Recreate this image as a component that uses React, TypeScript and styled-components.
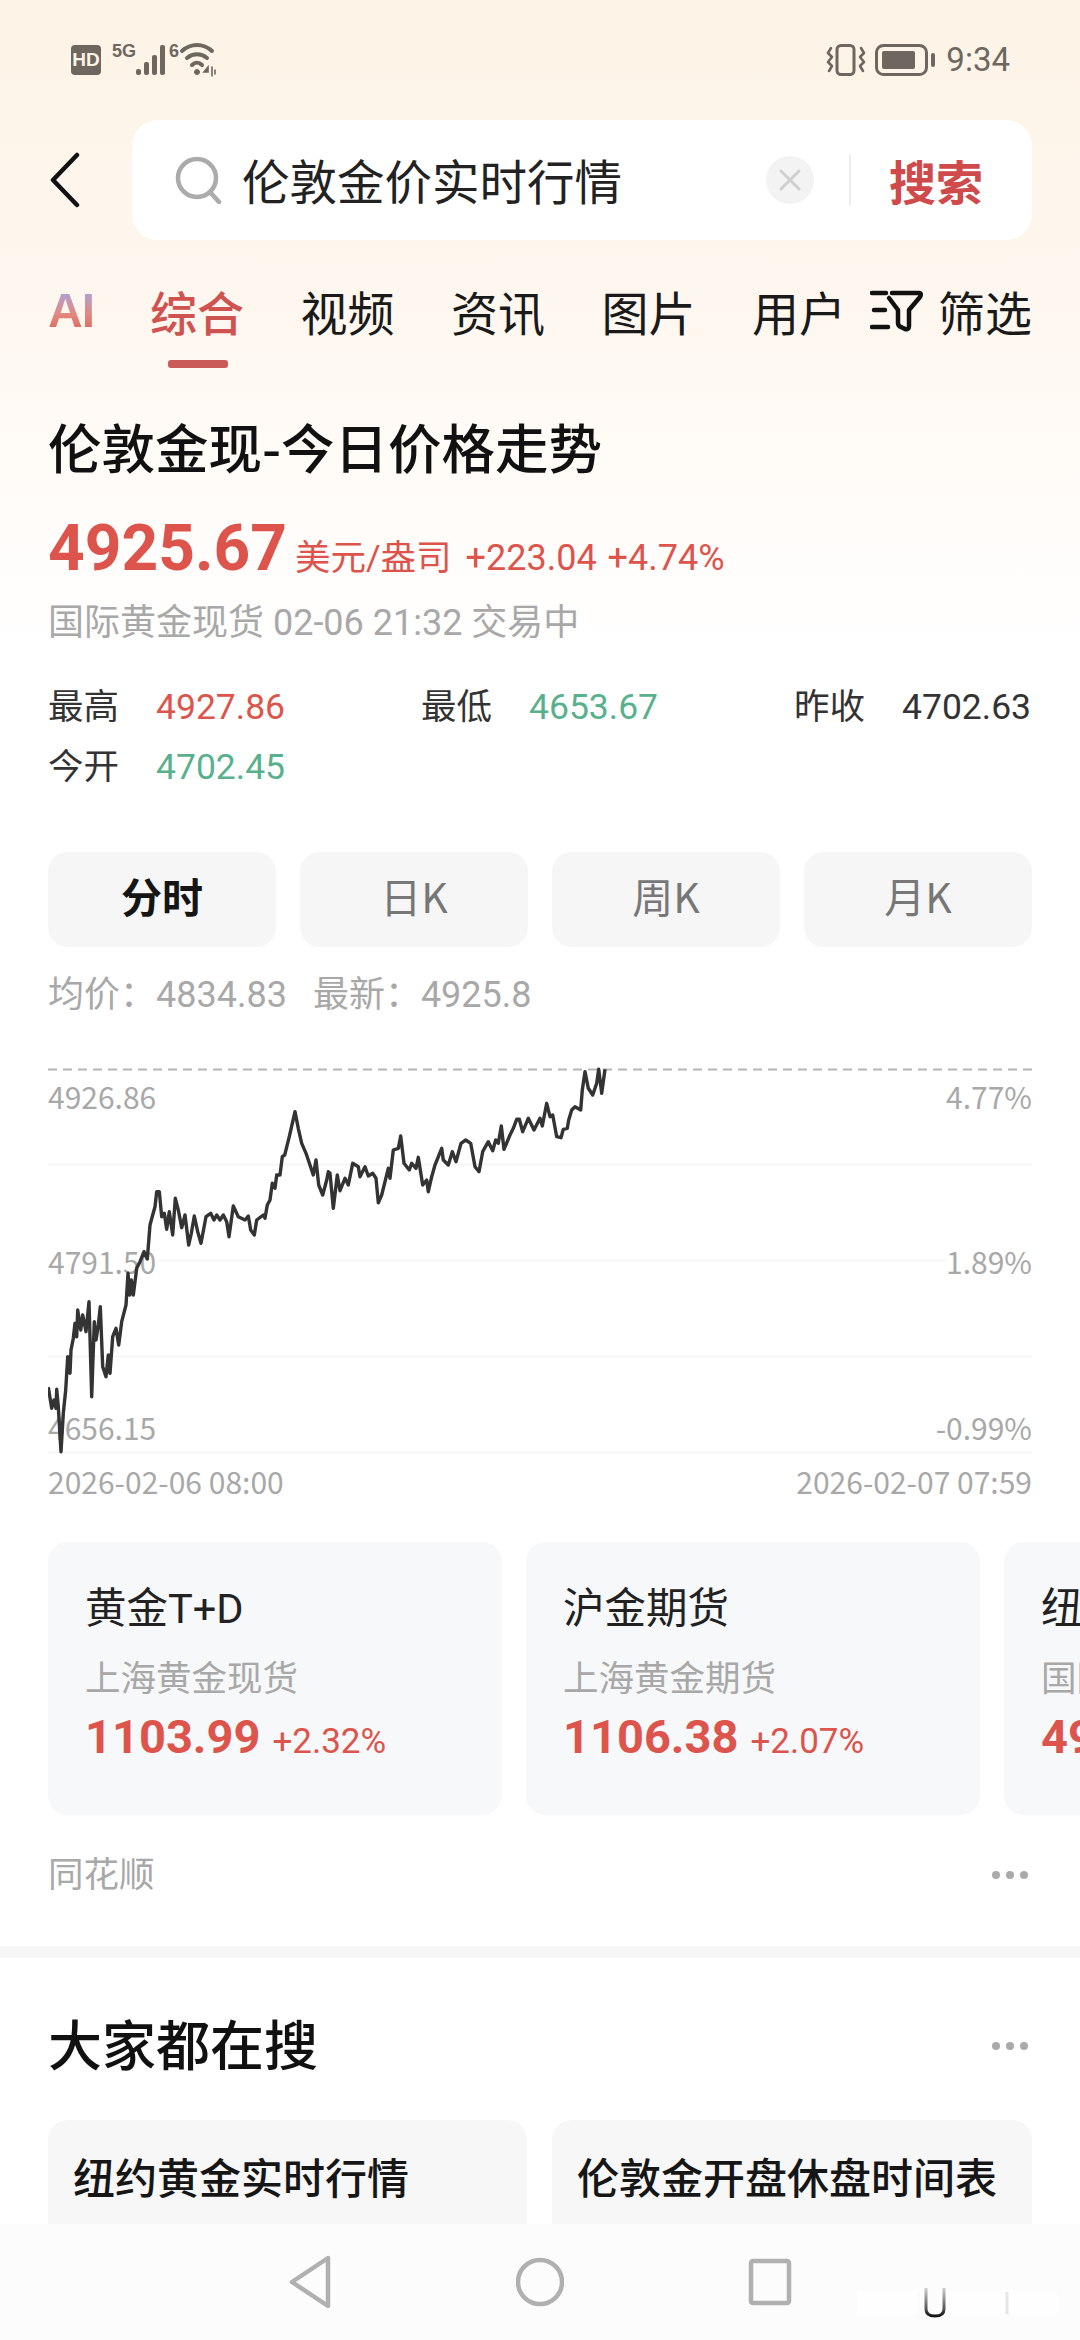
import React from "react";
import styled, { createGlobalStyle } from "styled-components";

const GlobalStyle = createGlobalStyle`
  html, body { margin: 0; padding: 0; background: #fff; }
  * { box-sizing: border-box; }
  body { font-family: "Noto Sans CJK SC", "Noto Sans", sans-serif; }
`;

const RED = "#dc544b";
const GREEN = "#58b08d";
const LABEL = "#a8a8a8";
const TAN = "#6e675f";
const MIXED = `Roboto, "Noto Sans CJK SC", sans-serif`;

const Page = styled.div`
  position: relative;
  width: 1080px;
  height: 2340px;
  overflow: hidden;
  background: linear-gradient(#fdf3e6 0, #fef7ef 300px, #fffaf5 420px, #fffdfb 560px, #fff 660px);
`;
const Top = styled.header`
  height: 400px;
`;
const StatusBar = styled.div`
  height: 120px;
  padding: 0 70px 0 71px;
  display: flex;
  align-items: center;
  justify-content: space-between;
`;
const StatusGroup = styled.div`
  display: flex;
  align-items: center;
  gap: ${(p: { $gap: number }) => p.$gap}px;
`;
const Hd = styled.span`
  width: 30px;
  height: 30px;
  border-radius: 4px;
  background: ${TAN};
  color: #fdf3e6;
  font: 700 19px/30px "Liberation Sans Narrow", "Liberation Sans", sans-serif;
  text-align: center;
`;
const NetTag = styled.span<{ $gap: number }>`
  position: relative;
  top: -9px;
  margin-left: ${(p) => p.$gap}px;
  color: ${TAN};
  font: 700 18px/18px "Liberation Sans Narrow", "Liberation Sans", sans-serif;
`;
const Clock = styled.span`
  color: ${TAN};
  font: 400 33px/40px Roboto, sans-serif;
`;
const SearchRow = styled.div`
  height: 120px;
  padding: 0 48px;
  display: flex;
  align-items: center;
  gap: 50px;
`;
const SearchBox = styled.div`
  flex: 1;
  height: 120px;
  padding: 0 49px 0 42px;
  background: #fff;
  border-radius: 26px;
  display: flex;
  align-items: center;
`;
const Query = styled.span`
  flex: 1;
  margin-left: 20px;
  color: #222;
  font-size: 47.5px;
  line-height: 60px;
`;
const Clear = styled.span`
  width: 48px;
  height: 48px;
  margin-right: -3px;
  border-radius: 50%;
  background: #f3f3f3;
  display: flex;
  align-items: center;
  justify-content: center;
`;
const Rule = styled.span`
  width: 2px;
  height: 50px;
  margin: 0 38px;
  background: #ececec;
`;
const SearchBtn = styled.span`
  color: #cf4b4b;
  font-size: 47px;
  font-weight: 700;
  line-height: 60px;
`;
const Tabs = styled.nav`
  margin-top: 41px;
  height: 60px;
  padding: 0 48px;
  display: flex;
  align-items: center;
`;
const AiTab = styled.span`
  flex: none;
  width: 102px;
  font: 700 48px/60px "Liberation Sans", sans-serif;
  letter-spacing: -1px;
  background: linear-gradient(#a3a6e6 12%, #e28a80 55%, #dc5f58 90%);
  -webkit-background-clip: text;
  background-clip: text;
  color: transparent;
`;
const Tab = styled.span<{ $active?: boolean; $last?: boolean }>`
  position: relative;
  flex: none;
  width: ${(p) => (p.$last ? 116 : 150.5)}px;
  font-size: 47px;
  line-height: 60px;
  color: ${(p) => (p.$active ? "#cf5350" : "#1a1a1a")};
  font-weight: ${(p) => (p.$active ? 500 : 400)};
  &::after {
    content: "";
    display: ${(p) => (p.$active ? "block" : "none")};
    position: absolute;
    left: 18px;
    top: 79px;
    width: 60px;
    height: 8px;
    border-radius: 3px;
    background: #c95a57;
  }
`;
const Filter = styled.span`
  margin-left: auto;
  display: flex;
  align-items: center;
  gap: 14px;
  font-size: 47px;
  line-height: 60px;
  color: #1a1a1a;
  white-space: nowrap;
  flex: none;
`;
const Section = styled.section`
  padding: 0 48px;
`;
const Title = styled.h1`
  margin: 16px 0 0;
  font-size: 53.5px;
  line-height: 60px;
  font-weight: 500;
  color: #111;
`;
const PriceRow = styled.div`
  margin-top: 33px;
  height: 80px;
  display: flex;
  align-items: baseline;
  color: ${RED};
  font-family: ${MIXED};
`;
const Price = styled.span`
  font-size: 64px;
  font-weight: 700;
  line-height: 80px;
`;
const PriceUnit = styled.span`
  margin-left: 8px;
  font-size: 35.5px;
`;
const PriceChange = styled.span`
  margin-left: 14px;
  font-size: 36px;
  word-spacing: 2px;
`;
const Sub = styled.div`
  margin-top: 12px;
  font-family: ${MIXED};
  font-size: 36px;
  line-height: 44px;
  color: ${LABEL};
`;
const Stats = styled.div`
  margin-top: 32px;
  display: grid;
  grid-template-columns: 373px 373px 238px;
  grid-auto-rows: 60px;
  font-family: ${MIXED};
  font-size: 35.5px;
  line-height: 60px;
`;
const Stat = styled.div`
  display: flex;
  color: #333;
`;
const StatLabel = styled.span`
  width: 108px;
`;
const StatValue = styled.span<{ $color: string }>`
  color: ${(p) => p.$color};
`;
const Segments = styled.div`
  margin-top: 55px;
  display: grid;
  grid-template-columns: repeat(4, 228px);
  gap: 24px;
`;
const Segment = styled.div<{ $on?: boolean }>`
  height: 95px;
  border-radius: 20px;
  background: #f6f6f6;
  text-align: center;
  font-size: 41px;
  line-height: 86px;
  font-weight: ${(p) => (p.$on ? 700 : 400)};
  color: ${(p) => (p.$on ? "#151515" : "#777")};
`;
const AvgRow = styled.div`
  margin-top: 26px;
  display: flex;
  gap: 26px;
  font-family: ${MIXED};
  font-size: 36px;
  line-height: 44px;
  color: ${LABEL};
`;
const Chart = styled.div`
  position: relative;
  margin-top: 43px;
  height: 400px;
  & > svg { display: block; }
`;
const LineLayer = styled.svg`
  position: absolute;
  left: 0;
  top: 0;
`;
const Axis = styled.span<{ $y: number; $right?: boolean }>`
  position: absolute;
  top: ${(p) => p.$y}px;
  ${(p) => (p.$right ? "right: 0;" : "left: 0;")}
  font-size: 30px;
  line-height: 38px;
  background: #fff;
  color: ${LABEL};
`;
const Dates = styled.div`
  margin-top: 1px;
  display: flex;
  justify-content: space-between;
  font-size: 30px;
  line-height: 40px;
  color: ${LABEL};
`;
const Rail = styled.div`
  margin-top: 41px;
  display: flex;
  gap: 24px;
  width: 1500px;
`;
const Quote = styled.article`
  flex: none;
  width: 454px;
  height: 273px;
  padding: 37px 37px 0;
  border-radius: 20px;
  background: #f7f8fa;
`;
const QuoteName = styled.div`
  font-family: ${MIXED};
  font-size: 41.5px;
  line-height: 60px;
  color: #222;
`;
const QuoteSub = styled.div`
  margin-top: 15px;
  font-size: 35.5px;
  line-height: 44px;
  color: ${LABEL};
`;
const QuoteLine = styled.div`
  margin-top: 9px;
  display: flex;
  align-items: baseline;
  gap: 12px;
  color: ${RED};
  font-family: ${MIXED};
  font-size: 35px;
  line-height: 60px;
`;
const QuoteValue = styled.span`
  font-size: 47px;
  font-weight: 700;
`;
const SourceRow = styled.div`
  margin-top: 35px;
  display: flex;
  align-items: center;
  justify-content: space-between;
  font-size: 35.5px;
  line-height: 44px;
  color: ${LABEL};
`;
const Dots = styled.span`
  display: flex;
  gap: 6px;
  margin-top: 6px;
  padding-right: 4px;
  & > i {
    width: 8px;
    height: 8px;
    border-radius: 50%;
    background: #aaa;
  }
`;
const Band = styled.div`
  margin-top: 52px;
  height: 12px;
  background: #f6f6f6;
`;
const HeadRow = styled.div`
  margin-top: 50px;
  display: flex;
  align-items: center;
  justify-content: space-between;
`;
const Heading = styled.h2`
  margin: 0;
  font-size: 54px;
  line-height: 70px;
  font-weight: 500;
  color: #111;
`;
const Hot = styled.div`
  margin-top: 42px;
  display: grid;
  grid-template-columns: 479px 480px;
  gap: 25px;
`;
const HotCard = styled.div`
  height: 220px;
  padding: 29px 25px 0;
  border-radius: 20px;
  background: #f7f7f7;
  font-size: 42px;
  line-height: 54px;
  font-weight: 500;
  color: #161616;
`;
const NavBar = styled.div`
  position: absolute;
  left: 0;
  right: 0;
  bottom: 0;
  height: 116px;
  background: #fcfcfc;
  display: flex;
  align-items: center;
  justify-content: center;
  gap: 184px;
`;
const Mark = styled.svg`
  position: absolute;
  right: 23px;
  bottom: 22px;
`;

const leftPts = [55,982,65,1045,72,1020,78,1045,80,988,85,1040,93,1175,100,1060,107,990,113,890,120,940,123,870,130,835,135,790,140,830,143,750,152,810,158,765,168,815,177,725,185,1010,193,785,198,840,205,795,211,740,218,920,228,950,235,885,240,940,248,830,258,805,266,855,275,785,288,735,294,640,299,705,304,660,310,705,320,625,330,605,342,575,352,597,360,495,368,465,375,440,380,395,388,395,395,470,403,460,410,508,418,455,428,525,436,415,445,450,455,503,465,465,476,555,484,520,493,468,503,515,513,550,528,470,542,460,552,480,560,465,570,480,580,465,590,485,597,530,610,438,625,470,645,480,655,468,662,510,673,525,680,480,700,465,705,475,712,435,720,420,727,370,735,385,740,345,750,345,757,290,764,285,778,230,795,155,805,205,815,250,828,280,835,300,850,345,858,300,866,375,878,405,890,360,895,335];
const rightPts = [0,340,10,445,22,345,30,392,45,355,55,375,68,310,85,320,90,350,105,320,115,348,128,340,138,355,145,428,155,405,175,325,180,355,190,270,205,265,212,228,222,310,238,330,245,310,258,325,265,292,278,375,290,360,295,395,305,350,315,315,335,265,340,300,355,315,367,275,378,305,393,250,407,240,422,250,435,320,447,335,458,275,475,245,488,272,497,240,505,250,514,198,522,268,540,225,550,205,560,178,568,178,578,215,595,175,612,210,630,175,637,198,650,130,660,170,668,165,680,230,693,233,700,208,712,205,716,180,725,150,735,140,752,150,757,90,765,35,775,85,788,105,800,70,806,28,815,100,825,28];

const toPath = (pts: number[], originX: number) => {
  const out: string[] = [];
  for (let i = 0; i < pts.length; i += 2) {
    out.push(`${(pts[i] / 3 + originX - 48).toFixed(1)},${(pts[i + 1] / 3).toFixed(1)}`);
  }
  return out.join(" ");
};
const linePoints = `${toPath(leftPts, 30)} ${toPath(rightPts, 330)}`;

const MoreDots = () => (
  <Dots>
    <i />
    <i />
    <i />
  </Dots>
);

export default function App() {
  return (
    <Page>
      <GlobalStyle />
      <Top>
        <StatusBar>
          <StatusGroup $gap={0}>
            <Hd>HD</Hd>
            <NetTag $gap={11}>5G</NetTag>
            <svg width="36" height="32" viewBox="0 0 36 32" fill="#6e675f">
              <rect x="0" y="25" width="5" height="6" rx="2" />
              <rect x="8" y="18" width="5" height="13" rx="2" />
              <rect x="16" y="11" width="5" height="20" rx="2" />
              <rect x="24" y="1" width="5" height="30" rx="2" />
            </svg>
            <NetTag $gap={-3}>6</NetTag>
            <svg width="38" height="34" viewBox="0 0 38 34" fill="none" stroke="#6e675f" strokeWidth="4" strokeLinecap="round">
              <path d="M3 8 C12 0 24 0 33 8" />
              <path d="M8 15 C14 10 22 10 28 15" />
              <path d="M13 22 C16 19 20 19 23 22" />
              <circle cx="18" cy="29" r="2.5" fill="#6e675f" strokeWidth="1" />
              <path d="M29 24 L25 29 H29 Z M33 24 V33 M36 27 V31" strokeWidth="1.6" fill="#6e675f" />
            </svg>
          </StatusGroup>
          <StatusGroup $gap={9}>
            <svg width="40" height="32" viewBox="0 0 40 32" fill="none" stroke="#6e675f" strokeLinecap="round" strokeLinejoin="round">
              <rect x="11" y="1.5" width="17" height="29" rx="4" strokeWidth="3" />
              <path d="M5 4 L2 9 L6 13 L2 18 L6 22 L3 27" strokeWidth="2.6" />
              <path d="M35 4 L38 9 L34 13 L38 18 L34 22 L37 27" strokeWidth="2.6" />
            </svg>
            <svg width="62" height="32" viewBox="0 0 62 32" fill="none">
              <rect x="1.5" y="1.5" width="50" height="29" rx="7" stroke="#6e675f" strokeWidth="3" />
              <rect x="7" y="7" width="33" height="18" rx="2" fill="#6e675f" />
              <rect x="56" y="9" width="4" height="14" rx="2" fill="#6e675f" />
            </svg>
            <Clock>9:34</Clock>
          </StatusGroup>
        </StatusBar>
        <SearchRow>
          <svg width="34" height="56" viewBox="0 0 34 56" fill="none" stroke="#111" strokeWidth="4.5" strokeLinecap="round" strokeLinejoin="round">
            <path d="M29 3 L5 28 L29 53" />
          </svg>
          <SearchBox>
            <svg width="48" height="48" viewBox="0 0 48 48" fill="none" stroke="#ababab" strokeWidth="4.5" strokeLinecap="round">
              <circle cx="23" cy="22" r="19" />
              <path d="M36 36 L45 46" />
            </svg>
            <Query>伦敦金价实时行情</Query>
            <Clear>
              <svg width="24" height="24" viewBox="0 0 24 24" fill="none" stroke="#cfcfcf" strokeWidth="3" strokeLinecap="round">
                <path d="M3 3 L21 21 M21 3 L3 21" />
              </svg>
            </Clear>
            <Rule />
            <SearchBtn>搜索</SearchBtn>
          </SearchBox>
        </SearchRow>
        <Tabs>
          <AiTab>AI</AiTab>
          <Tab $active>综合</Tab>
          <Tab>视频</Tab>
          <Tab>资讯</Tab>
          <Tab>图片</Tab>
          <Tab $last>用户</Tab>
          <Filter>
            <svg width="54" height="42" viewBox="0 0 54 42" fill="none" stroke="#111" strokeWidth="4.5" strokeLinecap="round" strokeLinejoin="round">
              <path d="M2 3 H16 M4 20 H15 M2 37 H18" />
              <path d="M22 3 H49 Q52 3 50 7 L39 20 V36 Q39 40 35 39 L31 37 Q28 36 28 33 V20 L19 8" />
            </svg>
            筛选
          </Filter>
        </Tabs>
      </Top>
      <Section>
        <Title>伦敦金现-今日价格走势</Title>
        <PriceRow>
          <Price>4925.67</Price>
          <PriceUnit>美元/盎司</PriceUnit>
          <PriceChange>+223.04 +4.74%</PriceChange>
        </PriceRow>
        <Sub>国际黄金现货 02-06 21:32 交易中</Sub>
        <Stats>
          <Stat><StatLabel>最高</StatLabel><StatValue $color={RED}>4927.86</StatValue></Stat>
          <Stat><StatLabel>最低</StatLabel><StatValue $color={GREEN}>4653.67</StatValue></Stat>
          <Stat><StatLabel>昨收</StatLabel><StatValue $color="#333">4702.63</StatValue></Stat>
          <Stat><StatLabel>今开</StatLabel><StatValue $color={GREEN}>4702.45</StatValue></Stat>
        </Stats>
        <Segments>
          <Segment $on>分时</Segment>
          <Segment>日K</Segment>
          <Segment>周K</Segment>
          <Segment>月K</Segment>
        </Segments>
        <AvgRow>
          <span>均价：4834.83</span>
          <span>最新：4925.8</span>
        </AvgRow>
        <Chart>
          <svg width="984" height="400" viewBox="0 0 984 400" fill="none">
            <path d="M0 9.5 H984" stroke="#b5b5b5" strokeWidth="2" strokeDasharray="9 6" />
            <path d="M0 104.5 H984 M0 200.5 H984 M0 296.5 H984 M0 392.5 H984" stroke="#f6f6f6" strokeWidth="2" />
          </svg>
          <Axis $y={17}>4926.86</Axis>
          <Axis $y={182}>4791.50</Axis>
          <Axis $y={348}>4656.15</Axis>
          <Axis $y={17} $right>4.77%</Axis>
          <Axis $y={182} $right>1.89%</Axis>
          <Axis $y={348} $right>-0.99%</Axis>
          <LineLayer width="984" height="400" viewBox="0 0 984 400" fill="none">
            <polyline points={linePoints} stroke="#333" strokeWidth="3.4" strokeLinejoin="round" />
          </LineLayer>
        </Chart>
        <Dates>
          <span>2026-02-06 08:00</span>
          <span>2026-02-07 07:59</span>
        </Dates>
        <Rail>
          <Quote>
            <QuoteName>黄金T+D</QuoteName>
            <QuoteSub>上海黄金现货</QuoteSub>
            <QuoteLine><QuoteValue>1103.99</QuoteValue>+2.32%</QuoteLine>
          </Quote>
          <Quote>
            <QuoteName>沪金期货</QuoteName>
            <QuoteSub>上海黄金期货</QuoteSub>
            <QuoteLine><QuoteValue>1106.38</QuoteValue>+2.07%</QuoteLine>
          </Quote>
          <Quote>
            <QuoteName>纽约黄金</QuoteName>
            <QuoteSub>国际黄金期货</QuoteSub>
            <QuoteLine><QuoteValue>4950.20</QuoteValue>+4.70%</QuoteLine>
          </Quote>
        </Rail>
        <SourceRow>
          <span>同花顺</span>
          <MoreDots />
        </SourceRow>
      </Section>
      <Band />
      <Section>
        <HeadRow>
          <Heading>大家都在搜</Heading>
          <MoreDots />
        </HeadRow>
        <Hot>
          <HotCard>纽约黄金实时行情</HotCard>
          <HotCard>伦敦金开盘休盘时间表</HotCard>
        </Hot>
      </Section>
      <NavBar>
        <svg width="44" height="60" viewBox="0 0 44 60" fill="none" stroke="#b0b0b0" strokeWidth="4.5" strokeLinejoin="round">
          <path d="M40 6 V54 L4 30 Z" />
        </svg>
        <svg width="48" height="60" viewBox="0 0 48 60" fill="none" stroke="#b0b0b0" strokeWidth="4.5">
          <circle cx="24" cy="30" r="22" />
        </svg>
        <svg width="44" height="60" viewBox="0 0 44 60" fill="none" stroke="#b0b0b0" strokeWidth="4.5" strokeLinejoin="round">
          <rect x="3" y="9" width="38" height="42" rx="2" />
        </svg>
        <Mark width="200" height="30" viewBox="0 0 200 30" fill="none">
          <defs>
            <linearGradient id="fadeDown" x1="0" y1="0" x2="0" y2="1">
              <stop offset="0" stopColor="#cfcfcf" />
              <stop offset="0.75" stopColor="#555" />
              <stop offset="1" stopColor="#111" />
            </linearGradient>
          </defs>
          <path d="M0 2 H60 V26 H0 Z M80 2 H200 V26 H80 Z" fill="#fefefe" />
          <path d="M69 0 V21 Q69 28 78 28 Q87 28 87 21 V0" stroke="url(#fadeDown)" strokeWidth="3" />
          <path d="M150 4 V26" stroke="#e6e6e6" strokeWidth="3" />
        </Mark>
      </NavBar>
    </Page>
  );
}
